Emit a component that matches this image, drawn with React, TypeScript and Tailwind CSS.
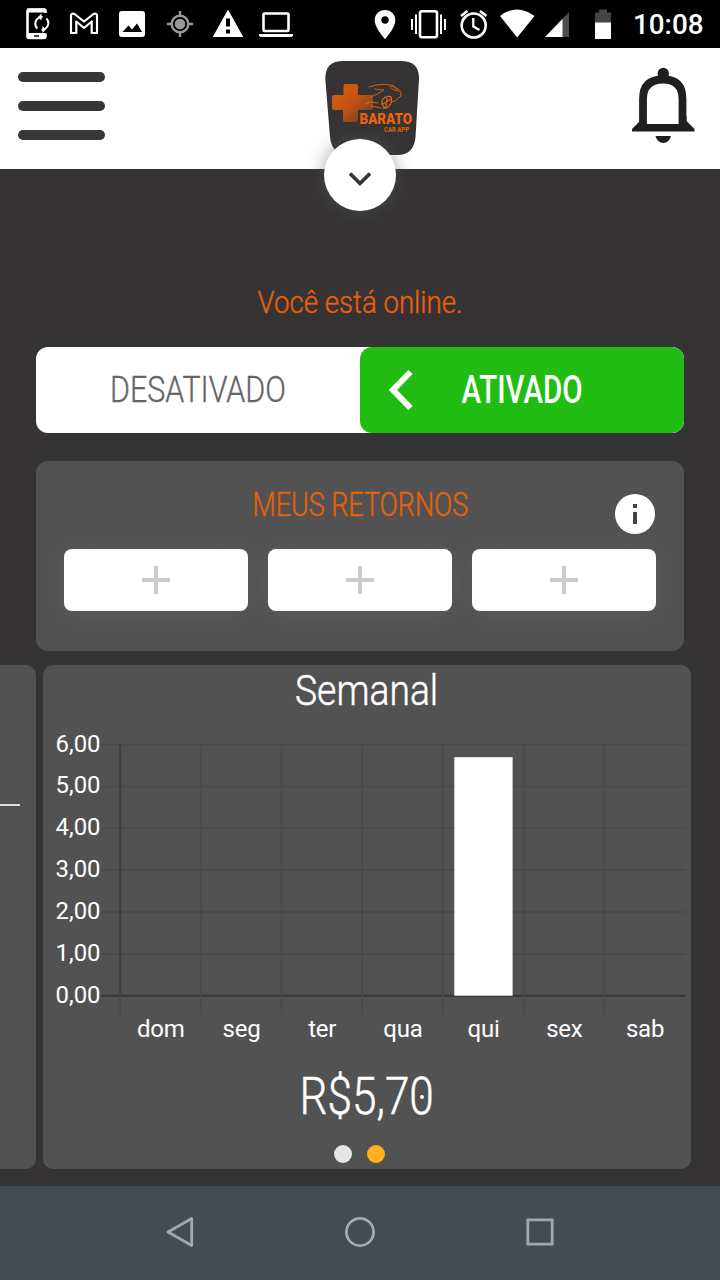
import { useLayoutEffect, useRef } from "react";

/** Text condensed horizontally so that it takes up exactly `width` pixels. */
function FitText({ text, width, className }: { text: string; width: number; className: string }) {
  const ref = useRef<HTMLSpanElement>(null);
  useLayoutEffect(() => {
    const el = ref.current;
    if (el) el.style.transform = `scaleX(${width / el.offsetWidth})`;
  }, [text, width]);
  return (
    <span className="flex justify-center" style={{ width }}>
      <span ref={ref} className={`inline-block shrink-0 origin-center whitespace-nowrap ${className}`}>
        {text}
      </span>
    </span>
  );
}

function StatusBar() {
  return (
    <div className="flex h-12 shrink-0 items-center justify-between bg-black text-white">
      <svg width="300" height="48" viewBox="0 0 300 48" fill="none">
        <path d="M45.500 13V11Q45.500 9.500 44 9.500H29.500Q27.500 9.500 27.500 11.500V36Q27.500 38 29.500 38H43.500Q45.500 38 45.500 36V33.500" stroke="#fff" strokeWidth="2.600" />
        <path d="M27 8.500H45V12.500H27zM27 33H45.500V39H27z" fill="#fff" />
        <path d="M34 36H39" stroke="#000" strokeWidth="1.400" />
        <path d="M37.500 28.500A6.500 6.500 0 0 1 38.500 18Q40 17 42.500 17M46.500 18.500A6.500 6.500 0 0 1 45.500 28.500Q44 29.700 41.500 29.700" stroke="#fff" strokeWidth="2" />
        <path d="M41.500 13.500V20.500L38 17zM42.500 26V33L46 29.600z" fill="#fff" />
        <path d="M71 15.200V33H76.300V21.500L84 28L91.700 21.500V33H97V15.200Q96.500 13 93.500 14L84 21.500L74.500 14Q71.500 13 71 15.200Z" stroke="#fff" strokeWidth="2.200" strokeLinejoin="round" />
        <rect x="119" y="11" width="26" height="26" rx="3" fill="#fff" />
        <path d="M122.500 32L128.500 25.500L132 29.500L137 23.500L142 32Z" fill="#000" />
        <circle cx="180" cy="24" r="8.300" stroke="#999" strokeWidth="2.400" />
        <circle cx="180" cy="24" r="5.300" fill="#999" />
        <path d="M180 11V15.500M180 32.500V37M167 24H171.500M188.500 24H193" stroke="#999" strokeWidth="2.400" />
        <path d="M228 10.500L242.500 36.500H213.500Z" fill="#fff" stroke="#fff" strokeLinejoin="round" />
        <path d="M226 18.500H230V26.500H226zM226 29.500H230V33.500H226z" fill="#000" />
        <rect x="263.500" y="13.500" width="25" height="17.500" rx="1" stroke="#fff" strokeWidth="2.600" />
        <path d="M259 34H293V35.500L291.500 37H260.500L259 35.500Z" fill="#fff" />
      </svg>
      <div className="flex items-center">
        <svg width="273" height="48" viewBox="360 0 273 48" fill="none">
          <path d="M385 10C379 10 374.700 14.500 374.700 20.200C374.700 28 385 39 385 39S395.300 28 395.300 20.200C395.300 14.500 391 10 385 10Z" fill="#fff" />
          <circle cx="385" cy="20" r="3.700" fill="#000" />
          <rect x="420" y="11.200" width="17" height="26" rx="2" stroke="#fff" strokeWidth="2.600" />
          <path d="M416 14.500V34M412 19V30M441 14.500V34M445 19V30" stroke="#fff" strokeWidth="2" />
          <circle cx="473.700" cy="25.500" r="12" stroke="#fff" strokeWidth="2.600" />
          <path d="M473.300 18V26.500L479.500 30" stroke="#fff" strokeWidth="2.300" />
          <path d="M461 16L467.500 11M480 11L486.500 16" stroke="#fff" strokeWidth="2.600" />
          <path d="M500 16Q517 3 534.500 16L517.200 37.500Z" fill="#fff" />
          <path d="M569 12V37H545Z" fill="#4d4d4d" />
          <path d="M562.500 19V37H545Z" fill="#fff" />
          <path d="M595 12.500H599V9.500H607V12.500H611V23H595Z" fill="#444" />
          <path d="M595 22.500H611V39H595Z" fill="#fff" />
        </svg>
        <div className="w-[87px] pt-[2px] font-['Roboto',sans-serif] text-[27px] font-medium leading-none">
          <FitText text="10:08" width={71} className="" />
        </div>
      </div>
    </div>
  );
}

function Logo() {
  return (
    <svg className="mt-[13px]" width="94" height="94" viewBox="0 0 94 94" fill="none">
      <defs>
        <linearGradient id="cross" x1="8" y1="24" x2="42" y2="60" gradientUnits="userSpaceOnUse">
          <stop offset="0" stopColor="#d95e0c" />
          <stop offset="0.500" stopColor="#c45413" />
          <stop offset="1" stopColor="#6f3f26" />
        </linearGradient>
      </defs>
      <path d="M18 0H76Q94.500 0 94 18L90.500 76Q89 94 72 94H23Q7 94 5 76L0.300 18Q0 0 18 0Z" fill="#363334" />
      <path d="M20.500 23H31Q33 23 33 25V34H46Q48 34 48 36V47Q48 49 46 49H33V59Q33 61 31 61H20Q18 61 18 59V49H9Q7 49 7 47V36Q7 34 9 34H18.500V25Q18.500 23 20.500 23Z" fill="url(#cross)" />
      <g stroke="#e8640c" strokeWidth="0.900" strokeLinecap="round">
        <path d="M44 26Q56 22 65 24L73 28Q77 31 76 35L70 40L66 41" />
        <path d="M65 25Q66 29 73 30M67 24L72 28M45 36Q52 34 59 29L50 28" />
        <path d="M43 41L53 42M46 45L56 47M40 43L44 42" />
        <path d="M60 47Q55 43 58 38Q62 34 66 36Q68 41 64 45Q62 48 58 47M58 43L66 38M61 46L62 37" strokeWidth="1.200" />
      </g>
      <text x="34.500" y="63" textLength="52.500" lengthAdjust="spacingAndGlyphs" fill="#ec650b" fontFamily="Roboto, sans-serif" fontWeight="900" fontSize="15.500">BARATO</text>
      <text x="59" y="71" textLength="25" lengthAdjust="spacingAndGlyphs" fill="#dc600d" fontFamily="Roboto, sans-serif" fontWeight="900" fontSize="7.500">CAR APP</text>
    </svg>
  );
}

function Header() {
  return (
    <header className="relative flex h-[120.500px] shrink-0 bg-white px-[18px]">
      <div className="flex w-[87px] flex-col gap-[18.500px] pt-6">
        <div className="h-[10.300px] rounded-full bg-[#393637]" />
        <div className="h-[10.300px] rounded-full bg-[#393637]" />
        <div className="h-[10.300px] rounded-full bg-[#393637]" />
      </div>
      <div className="ml-[220px]">
        <Logo />
      </div>
      <svg className="ml-auto mr-[7px] mt-[19px]" width="64" height="78" viewBox="0 0 64 78" fill="none">
        <circle cx="32.300" cy="6.500" r="5.700" fill="#1f1f1f" />
        <path d="M12 61V32Q12 12.500 32.300 12.500Q51.500 12.500 51.500 32V61" stroke="#1f1f1f" strokeWidth="7.800" />
        <path d="M9 49V54L1 62V64.500H63.500V62L55.500 54V49L50 57H14Z" fill="#1f1f1f" />
        <path d="M24.500 69H40Q38 76 32.300 76Q26.500 76 24.500 69Z" fill="#1f1f1f" />
      </svg>
      <button className="absolute left-[324px] top-[90.500px] z-10 flex size-[72px] items-center justify-center rounded-full bg-white shadow-[0_0_18px_rgba(90,90,90,0.550)]">
        <svg width="26" height="18" viewBox="0 0 26 18" fill="none" className="mt-[8px]">
          <path d="M3 3.500L13 13.500L23 3.500" stroke="#333" strokeWidth="3.600" />
        </svg>
      </button>
    </header>
  );
}

function StatusToggle() {
  return (
    <div className="mx-9 mt-[24px] flex h-[86px] overflow-hidden rounded-xl bg-white">
      <button className="flex w-1/2 items-center justify-center text-[37px] font-light text-[#666] [-webkit-text-stroke:0.400px_currentColor]">
        <FitText text="DESATIVADO" width={176} className="" />
      </button>
      <button className="flex w-1/2 items-center rounded-xl bg-[#22bd12] pl-7 text-[38.500px] font-medium text-white">
        <svg width="26" height="42" viewBox="0 0 26 42" fill="none">
          <path d="M22.500 3L5 21L22.500 39" stroke="#fff" strokeWidth="6" />
        </svg>
        <span className="ml-12">
          <FitText text="ATIVADO" width={121} className="" />
        </span>
      </button>
    </div>
  );
}

function Returns() {
  return (
    <section className="mx-9 mt-[28px] h-[190px] rounded-xl bg-[#525252] px-7">
      <div className="relative flex h-[88px] justify-center pt-[24px] text-[33.500px] font-light leading-[40px] text-[#e8600a] [-webkit-text-stroke:0.400px_currentColor]">
        <FitText text="MEUS RETORNOS" width={216} className="" />
        <div className="absolute right-[1px] top-[33.500px] flex size-10 items-center justify-center rounded-full bg-white">
          <svg width="6" height="22" viewBox="0 0 6 22" fill="#444">
            <path d="M1 1H5V5H1zM1 9H5V21H1z" />
          </svg>
        </div>
      </div>
      <div className="grid grid-cols-3 gap-5">
        {[0, 1, 2].map((slot) => (
          <button key={slot} className="flex h-[62px] items-center justify-center rounded-lg bg-white pt-px shadow-[0_2px_22px_rgba(115,115,115,0.350)]">
            <svg width="28" height="28" viewBox="0 0 28 28" fill="none">
              <path d="M14 0V28M0 14H28" stroke="#ccc" strokeWidth="4" />
            </svg>
          </button>
        ))}
      </div>
    </section>
  );
}

const DAYS = [
  { label: "dom", value: 0 },
  { label: "seg", value: 0 },
  { label: "ter", value: 0 },
  { label: "qua", value: 0 },
  { label: "qui", value: 5.7 },
  { label: "sex", value: 0 },
  { label: "sab", value: 0 },
];
const TICKS = ["0,00", "1,00", "2,00", "3,00", "4,00", "5,00", "6,00"];
const STEP_X = 80.7;
const STEP_Y = 41.85;
const BASE_Y = 270.7;

function WeekChart() {
  return (
    <svg width="648" height="320" viewBox="0 0 648 320" className="block" fontFamily="Roboto, sans-serif" fontSize="24" fill="#fff">
      {TICKS.map((tick, i) => {
        const y = BASE_Y - i * STEP_Y;
        return (
          <g key={tick}>
            <path d={`M58 ${y}H642.500`} stroke={i === 0 ? "#363636" : "#4a4a4a"} strokeWidth={i === 0 ? 2 : 1.6} />
            <text x="57.500" y={y + 7} textAnchor="end" textLength="45" lengthAdjust="spacingAndGlyphs">{tick}</text>
          </g>
        );
      })}
      {DAYS.map((day, i) => {
        const x = 77.2 + i * STEP_X;
        return (
          <g key={day.label}>
            <path d={`M${x} 19.500V290`} stroke="#494949" strokeWidth="1.500" />
            {i === 0 && <path d={`M${x} 19.500V${BASE_Y}`} stroke="#404040" strokeWidth="2" />}
            {day.value > 0 && (
              <rect x={x + 11.3} y={BASE_Y - day.value * STEP_Y} width="58.300" height={day.value * STEP_Y} />
            )}
            <text x={x + STEP_X / 2 + 0.3} y="311.500" textAnchor="middle" letterSpacing="-0.2">{day.label}</text>
          </g>
        );
      })}
    </svg>
  );
}

function Carousel() {
  return (
    <div className="mt-[14.500px] flex h-[504px] gap-[7px]">
      <div className="w-9 rounded-r-[10px] bg-[#525252] pt-[138.500px]">
        <div className="h-0.5 w-5 bg-[#ddd]" />
      </div>
      <div className="flex w-[648px] flex-col items-center rounded-[10px] bg-[#525252] text-white">
        <div className="flex h-[60px] items-start pt-[1px] text-[43px] font-light leading-[48px] [-webkit-text-stroke:0.500px_currentColor]">
          <FitText text="Semanal" width={143} className="" />
        </div>
        <WeekChart />
        <div className="relative mt-[22px] text-[51px] font-light leading-[60px] [-webkit-text-stroke:0.500px_currentColor]">
          <FitText text="R$5,70" width={134} className="" />
          <span className="absolute right-[10px] top-[28px] size-1 rounded-full bg-white" />
        </div>
        <div className="mr-[15px] mt-[17.500px] flex gap-[15px]">
          <span className="size-[18px] rounded-full bg-[#e6e6e6]" />
          <span className="size-[18px] rounded-full bg-[#ffb120]" />
        </div>
      </div>
    </div>
  );
}

function NavBar() {
  return (
    <nav className="mt-auto flex h-[95px] items-center justify-center gap-[140px] border-t border-[#2e3236] bg-[#444c51] pb-[2px]">
      <svg width="40" height="40" viewBox="0 0 40 40" fill="none" stroke="#a2a9ac" strokeWidth="2.800" strokeLinejoin="round">
        <path d="M8 20L31.700 6.500V33.500Z" />
      </svg>
      <svg width="40" height="40" viewBox="0 0 40 40" fill="none" stroke="#a2a9ac" strokeWidth="2.800">
        <circle cx="20" cy="20" r="13.600" />
      </svg>
      <svg width="40" height="40" viewBox="0 0 40 40" fill="none" stroke="#a2a9ac" strokeWidth="2.800" strokeLinejoin="round">
        <rect x="7.800" y="7.800" width="24.400" height="24.400" />
      </svg>
    </nav>
  );
}

export default function App() {
  return (
    <div className="flex h-[1280px] w-[720px] flex-col overflow-hidden bg-[#363334] font-['Roboto',sans-serif]">
      <StatusBar />
      <Header />
      <div className="flex justify-center pt-[114px] text-[31px] font-light leading-[40px] text-[#e8600a] [-webkit-text-stroke:0.400px_currentColor]">
        <FitText text="Você está online." width={205} className="" />
      </div>
      <StatusToggle />
      <Returns />
      <Carousel />
      <NavBar />
    </div>
  );
}
